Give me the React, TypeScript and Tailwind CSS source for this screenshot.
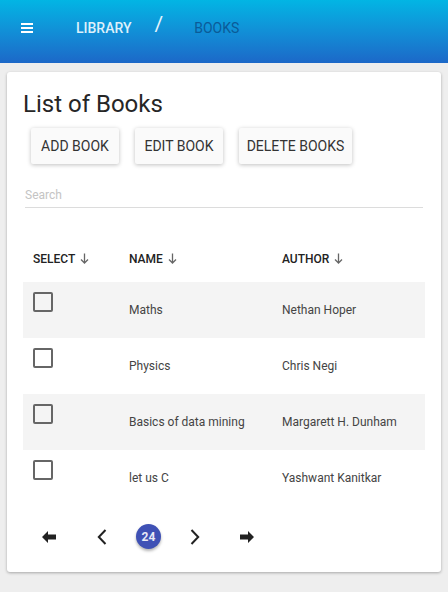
import React from 'react';

const books = [
    { name: 'Maths', author: 'Nethan Hoper' },
    { name: 'Physics', author: 'Chris Negi' },
    { name: 'Basics of data mining', author: 'Margarett H. Dunham' },
    { name: 'let us C', author: 'Yashwant Kanitkar' },
];

const ArrowLeft = () => (
    <svg width="14" height="12" viewBox="0 0 14 12" fill="#222">
        <path d="M0 6 L6 0 L6 3.5 L14 3.5 L14 8.5 L6 8.5 L6 12 Z" />
    </svg>
);

const ArrowRight = () => (
    <svg width="14" height="12" viewBox="0 0 14 12" fill="#222">
        <path d="M14 6 L8 0 L8 3.5 L0 3.5 L0 8.5 L8 8.5 L8 12 Z" />
    </svg>
);

const ChevronLeft = () => (
    <svg width="10" height="16" viewBox="0 0 10 16" fill="none" stroke="#222" strokeWidth="2">
        <path d="M8.5 1 L1.8 8 L8.5 15" />
    </svg>
);

const ChevronRight = () => (
    <svg width="10" height="16" viewBox="0 0 10 16" fill="none" stroke="#222" strokeWidth="2">
        <path d="M1.5 1 L8.2 8 L1.5 15" />
    </svg>
);

const SortDown = () => (
    <svg className="ml-[5px] inline-block align-[-1px]" width="9" height="11" viewBox="0 0 9 11" fill="none" stroke="#666" strokeWidth="1.3">
        <path d="M4.5 0.5 V10 M1 6.5 L4.5 10 L8 6.5" />
    </svg>
);

const App = () => {
    return (
        <div className="min-h-[592px] bg-[#eeeeee] font-['Roboto',sans-serif]">
            <header className="h-[63px] bg-linear-to-b from-[#02b5e4] to-[#1c68c8]">
                <div className="flex h-14 items-center">
                    <div className="ml-[21px] flex w-3 flex-col gap-[2px]">
                        <span className="h-[2px] bg-white" />
                        <span className="h-[2px] bg-white" />
                        <span className="h-[2px] bg-white" />
                    </div>
                    <span className="ml-[43px] text-sm font-medium text-[#ddf0fb]">LIBRARY</span>
                    <span className="ml-[23px] -mt-[6px] text-[21px] text-[#e6f4fc]">/</span>
                    <span className="ml-[31px] text-sm text-[#0b5b98]">BOOKS</span>
                </div>
            </header>

            <div className="mx-[7px] mt-[9px] rounded-[3px] bg-white px-4 pt-4 shadow-[0_1px_3px_rgba(0,0,0,0.3)]">
                <h1 className="text-2xl leading-8 text-[#262626]">List of Books</h1>

                <div className="flex">
                    <button className="m-2 h-9 w-[88px] rounded-[2px] bg-[#fafafa] text-sm text-[#333] shadow-[0_1px_4px_rgba(0,0,0,0.25)]">
                        ADD BOOK
                    </button>
                    <button className="m-2 h-9 w-[88px] rounded-[2px] bg-[#fafafa] text-sm text-[#333] shadow-[0_1px_4px_rgba(0,0,0,0.25)]">
                        EDIT BOOK
                    </button>
                    <button className="m-2 h-9 w-[113px] rounded-[2px] bg-[#fafafa] text-sm text-[#333] shadow-[0_1px_4px_rgba(0,0,0,0.25)]">
                        DELETE BOOKS
                    </button>
                </div>

                <div className="ml-[2px] mr-[2px] mt-[10px] border-b border-[#dcdcdc] pb-px">
                    <input
                        className="w-full bg-transparent text-xs text-[#333] outline-none placeholder:text-[#c4c4c4]"
                        placeholder="Search"
                    />
                </div>

                <div className="mt-[28px] grid h-[46px] grid-cols-[96px_153px_1fr] items-center text-xs font-medium text-[#222]">
                    <span className="pl-[10px]">
                        SELECT
                        <SortDown />
                    </span>
                    <span className="pl-[10px]">
                        NAME
                        <SortDown />
                    </span>
                    <span className="pl-[10px]">
                        AUTHOR
                        <SortDown />
                    </span>
                </div>

                {books.map((book, i) => (
                    <div
                        key={book.name}
                        className={`grid h-14 grid-cols-[96px_153px_1fr] items-center text-xs text-[#444] ${
                            i % 2 === 0 ? 'bg-[#f4f4f4]' : 'bg-white'
                        }`}
                    >
                        <span className="self-start pl-[10px] pt-[10px]">
                            <span className="block size-5 rounded-[2px] border-2 border-[#666]" />
                        </span>
                        <span className="pl-[10px]">{book.name}</span>
                        <span className="pl-[10px]">{book.author}</span>
                    </div>
                ))}

                <div className="flex items-center pb-[23px] pt-[18px]">
                    <span className="ml-[19px] flex w-3.5 justify-center">
                        <ArrowLeft />
                    </span>
                    <span className="ml-[41px] flex w-2.5 justify-center">
                        <ChevronLeft />
                    </span>
                    <span className="ml-[29px] flex size-[25px] items-center justify-center rounded-full bg-[#3f51b5] text-xs font-bold text-[#e8eaf6] shadow-[0_2px_3px_rgba(0,0,0,0.3)]">
                        24
                    </span>
                    <span className="ml-[29px] flex w-2.5 justify-center">
                        <ChevronRight />
                    </span>
                    <span className="ml-[40px] flex w-3.5 justify-center">
                        <ArrowRight />
                    </span>
                </div>
            </div>
        </div>
    );
};

export default App;
